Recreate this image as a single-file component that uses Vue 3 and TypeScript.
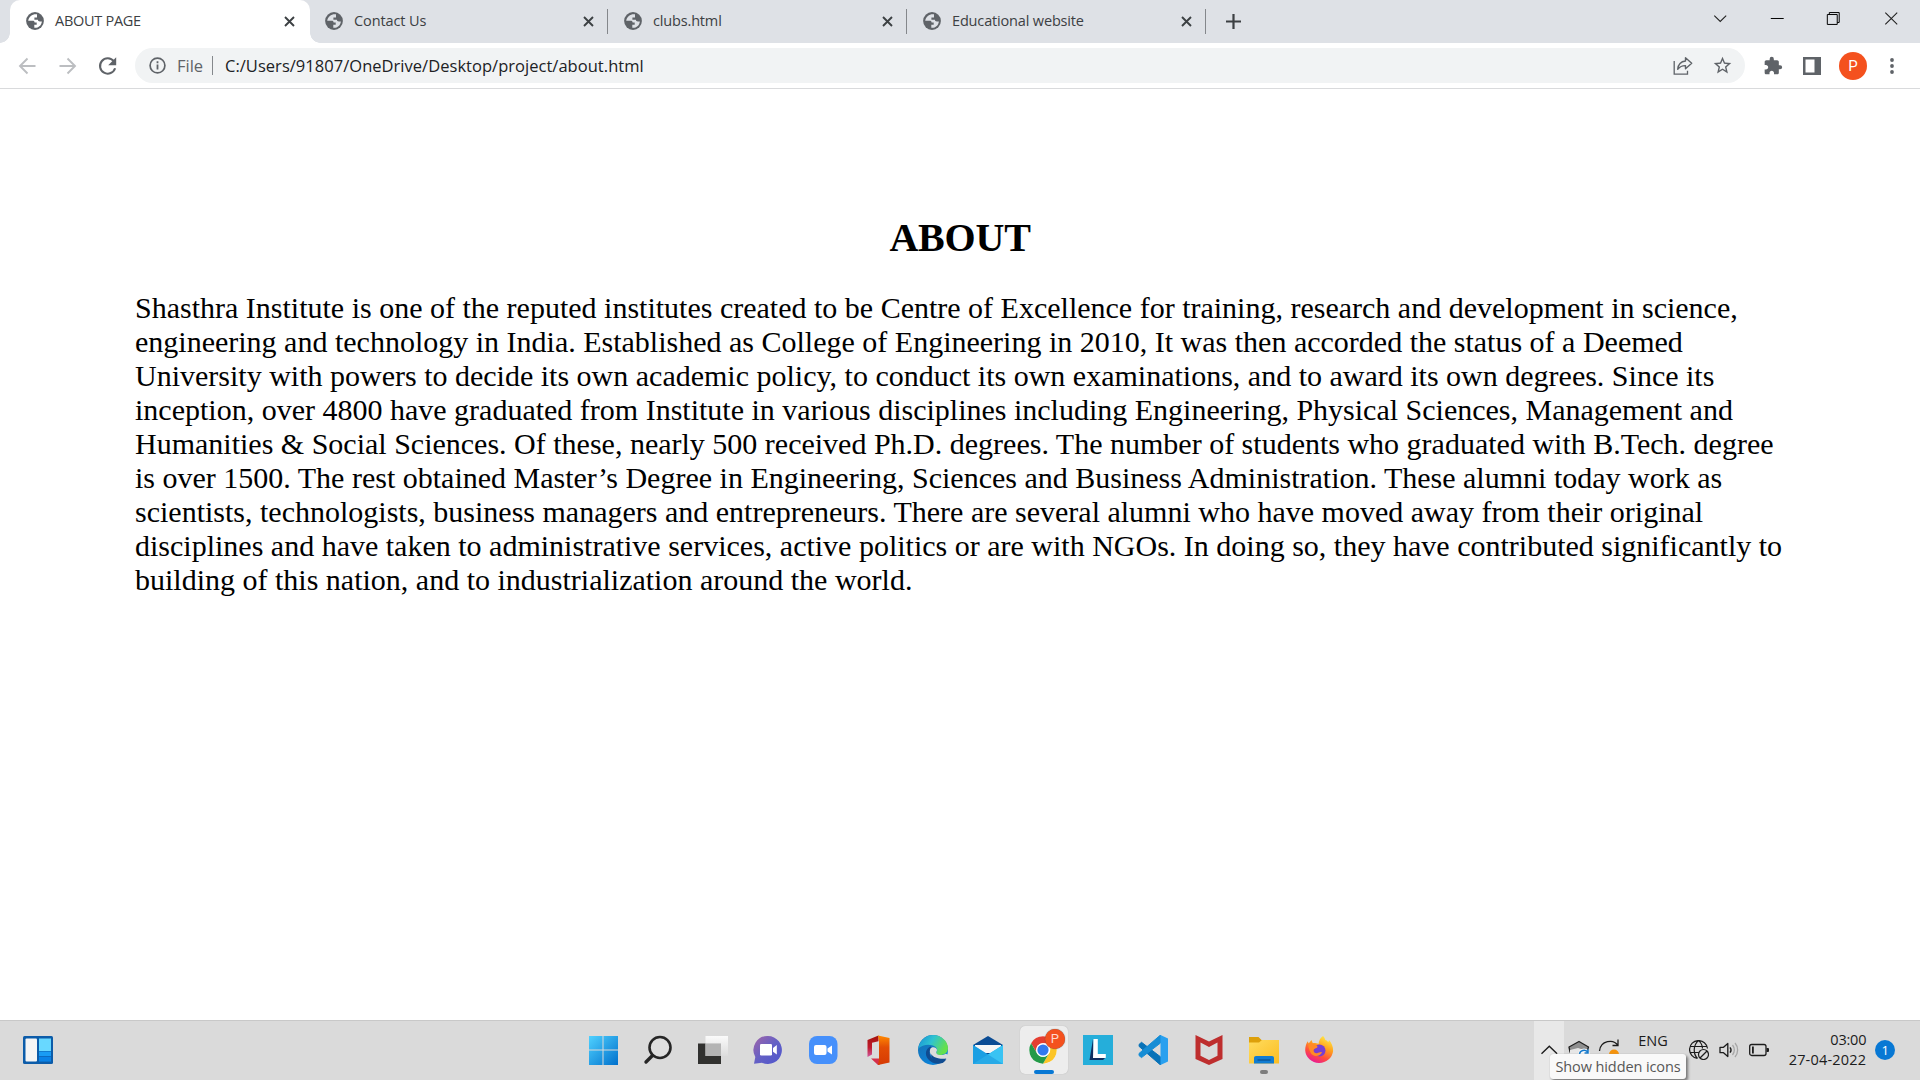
<script setup lang="ts">
interface Tab {
  title: string
  active: boolean
  spacing: string
}

const tabs: Tab[] = [
  { title: 'ABOUT PAGE', active: true, spacing: '-0.28px' },
  { title: 'Contact Us', active: false, spacing: '-0.1px' },
  { title: 'clubs.html', active: false, spacing: '-0.16px' },
  { title: 'Educational website', active: false, spacing: '-0.16px' },
]

const lines: string[] = [
  'Shasthra Institute is one of the reputed institutes created to be Centre of Excellence for training, research and development in science,',
  'engineering and technology in India. Established as College of Engineering in 2010, It was then accorded the status of a Deemed',
  'University with powers to decide its own academic policy, to conduct its own examinations, and to award its own degrees. Since its',
  'inception, over 4800 have graduated from Institute in various disciplines including Engineering, Physical Sciences, Management and',
  'Humanities & Social Sciences. Of these, nearly 500 received Ph.D. degrees. The number of students who graduated with B.Tech. degree',
  'is over 1500. The rest obtained Master’s Degree in Engineering, Sciences and Business Administration. These alumni today work as',
  'scientists, technologists, business managers and entrepreneurs. There are several alumni who have moved away from their original',
  'disciplines and have taken to administrative services, active politics or are with NGOs. In doing so, they have contributed significantly to',
  'building of this nation, and to industrialization around the world.',
]
</script>

<template>
  <div class="screen">
    <header class="tabstrip">
      <div v-for="tab in tabs" :key="tab.title" class="tab" :class="{ active: tab.active }">
        <svg class="globe" viewBox="0 0 18 18">
          <circle cx="9" cy="9" r="8.9" fill="#5f6368" />
          <path d="M11 2.300C6.800 1.600 3 4.400 2.200 8.700h4.600c1.100 0 1.800.7 1.800 1.700h2.100v2.300H8.300v3.100c4 .4 7.200-2.200 7.600-6.300h-2c-1.300 0-2-.7-2-1.700H8.400V5.500H11z" :fill="tab.active ? '#ffffff' : '#dee1e6'" />
        </svg>
        <span class="title" :style="{ letterSpacing: tab.spacing }">{{ tab.title }}</span>
        <svg class="close" viewBox="0 0 11 11"><path d="M1 1l9 9M10 1l-9 9" stroke="#3c4043" stroke-width="1.9" /></svg>
      </div>
      <svg class="plus" viewBox="0 0 15 15"><path d="M7.500 0v15M0 7.500h15" stroke="#3c4043" stroke-width="2.200" /></svg>
      <div class="winbtns">
        <svg viewBox="0 0 58 36"><path d="M23.500 15.500l6 6 6-6" fill="none" stroke="#222" stroke-width="1.100" /></svg>
        <svg viewBox="0 0 58 36"><path d="M22 18.500h13" stroke="#000" /></svg>
        <svg viewBox="0 0 58 36"><path d="M21.500 14.500h10v10h-10zM23.500 14.500v-2h10v10h-2" fill="none" stroke="#000" /></svg>
        <svg viewBox="0 0 58 36"><path d="M21.500 12.500l12 12M33.500 12.500l-12 12" stroke="#222" stroke-width="1.100" /></svg>
      </div>
    </header>

    <div class="toolbar">
      <svg class="nav" viewBox="0 0 40 44"><path d="M35.500 22H20.500M27.500 14.500L20 22l7.500 7.500" fill="none" stroke="#bcbec1" stroke-width="1.900" /></svg>
      <svg class="nav" viewBox="0 0 40 44"><path d="M19.500 22h15M27.500 14.500l7.500 7.500-7.500 7.500" fill="none" stroke="#bcbec1" stroke-width="1.900" /></svg>
      <svg class="nav" viewBox="0 0 40 44"><path d="M33.800 17.200a7.700 7.700 0 1 0 1.300 7" fill="none" stroke="#5f6368" stroke-width="2.100" /><path d="M36.200 13.200v8h-8z" fill="#5f6368" /></svg>
      <div class="omnibox">
        <svg class="info" viewBox="0 0 17 17"><circle cx="8.500" cy="8.500" r="7.400" fill="none" stroke="#5f6368" stroke-width="1.700" /><path d="M8.500 7.500v5M8.500 4.300v1.900" stroke="#5f6368" stroke-width="1.800" /></svg>
        <span class="scheme">File</span>
        <i class="bar"></i>
        <span class="url">C:/Users/91807/OneDrive/Desktop/project/about.html</span>
        <svg class="share" viewBox="0 0 20 20"><path d="M1.200 5v13.200h13.300v-3.500" fill="none" stroke="#5f6368" stroke-width="1.300" /><path d="M12.500 1.800l6.200 5.500-6.200 5.500V9.600C9 9.500 6.500 11 4.700 13.200 5.200 8.500 8 5.500 12.500 5z" fill="none" stroke="#5f6368" stroke-width="1.400" stroke-linejoin="round" /></svg>
        <svg class="star" viewBox="0 0 24 24"><path d="M22 9.240l-7.190-.62L12 2 9.190 8.630 2 9.240l5.460 4.730L5.820 21 12 17.270 18.180 21l-1.630-7.030L22 9.240zM12 15.400l-3.760 2.270 1-4.280-3.320-2.880 4.380-.38L12 6.100l1.710 4.040 4.380.38-3.320 2.880 1 4.280L12 15.400z" fill="#5f6368" /></svg>
      </div>
      <svg class="ext" viewBox="0 0 24 24"><path d="M20.500 11H19V7c0-1.100-.9-2-2-2h-4V3.500a2.500 2.500 0 0 0-5 0V5H4c-1.100 0-2 .9-2 2v3.800h1.500c1.500 0 2.700 1.200 2.700 2.700s-1.200 2.700-2.700 2.700H2V20c0 1.100.9 2 2 2h3.800v-1.500c0-1.500 1.200-2.700 2.700-2.700s2.700 1.200 2.700 2.700V22H17c1.100 0 2-.9 2-2v-4h1.500a2.500 2.500 0 0 0 0-5z" fill="#5f6368" /></svg>
      <svg class="panel" viewBox="0 0 18 18"><path d="M0 0h18v18H0zM2.500 2.500v13h9v-13z" fill="#5f6368" fill-rule="evenodd" /></svg>
      <span class="avatar">P</span>
      <svg class="dots" viewBox="0 0 4 16"><circle cx="2" cy="2" r="1.900" /><circle cx="2" cy="8" r="1.900" /><circle cx="2" cy="14" r="1.900" /></svg>
    </div>

    <main class="page">
      <h1>ABOUT</h1>
      <p><span v-for="line in lines" :key="line" class="line">{{ line }}</span></p>
    </main>

    <footer class="taskbar">
      <svg width="0" height="0" class="defs">
        <defs>
          <linearGradient id="win" x1="0" y1="0" x2="1" y2="1"><stop offset="0" stop-color="#4fd1ff" /><stop offset="1" stop-color="#0070cc" /></linearGradient>
          <linearGradient id="glass" x1="0" y1="0" x2="0" y2="1"><stop offset="0" stop-color="#fff" /><stop offset="1" stop-color="#ddd" /></linearGradient>
          <linearGradient id="chat" x1="0" y1="0" x2="1" y2="1"><stop offset="0" stop-color="#a265a8" /><stop offset=".5" stop-color="#6460c5" /><stop offset="1" stop-color="#4e55cd" /></linearGradient>
          <linearGradient id="officeL" x1="0" y1="0" x2="0" y2="1"><stop offset="0" stop-color="#a3130c" /><stop offset=".55" stop-color="#c11a2d" /><stop offset="1" stop-color="#d0579c" /></linearGradient>
          <linearGradient id="officeR" x1="0" y1="0" x2="0" y2="1"><stop offset="0" stop-color="#ff8a00" /><stop offset=".4" stop-color="#e34d05" /><stop offset="1" stop-color="#d63a04" /></linearGradient>
          <linearGradient id="edgeTop" x1="0" y1="0" x2="1" y2=".4"><stop offset="0" stop-color="#168dd8" /><stop offset=".5" stop-color="#2fc3d0" /><stop offset="1" stop-color="#65e04c" /></linearGradient>
          <linearGradient id="edgeLeft" x1="0" y1="0" x2=".6" y2="1"><stop offset="0" stop-color="#1a6fae" /><stop offset="1" stop-color="#0a84dc" /></linearGradient>
          <linearGradient id="folder" x1="0" y1="0" x2="1" y2="1"><stop offset="0" stop-color="#ffdc5e" /><stop offset="1" stop-color="#fbbd22" /></linearGradient>
          <linearGradient id="fox" x1=".8" y1="0" x2=".3" y2="1"><stop offset="0" stop-color="#fff04a" /><stop offset=".4" stop-color="#ffa01e" /><stop offset=".7" stop-color="#ff4d3c" /><stop offset="1" stop-color="#e8179a" /></linearGradient>
        </defs>
      </svg>

      <svg class="widgets" viewBox="0 0 30 28"><rect width="30" height="28" rx="1.500" fill="#0c5ca9" /><rect x="2.500" y="2.500" width="11.500" height="23" rx="1" fill="#f5f5f5" /><path d="M16 2.500h12v12.500H16z" fill="#68d8ff" /><path d="M16 15.500h12v4.500H16z" fill="#199cf4" /><path d="M16 20.600h12v5H16z" fill="#0a82e6" /></svg>

      <div class="apps">
        <div class="app"><svg viewBox="0 0 30 30"><path d="M1 1h13.500v13.500H1zM15.500 1H30v13.500H15.500zM1 15.500h13.500V30H1zM15.500 15.500H30V30H15.500z" fill="url(#win)" /></svg></div>
        <div class="app"><svg viewBox="0 0 30 30"><circle cx="17" cy="12.500" r="10.500" fill="#e3e3e3" fill-opacity=".6" stroke="#262626" stroke-width="2.600" /><path d="M9.500 20.500L3 27" stroke="#262626" stroke-width="3.400" stroke-linecap="round" /></svg></div>
        <div class="app"><svg viewBox="0 0 30 30"><path d="M0 8.500h23V29H0z" fill="#31312f" /><path d="M7.500 1H30v20H7.500z" fill="url(#glass)" fill-opacity=".88" /><path d="M7.500 8.500H23V21H7.500z" fill="#b4b4b4" /></svg></div>
        <div class="app"><svg viewBox="0 0 30 30"><path d="M15 1a14 14 0 1 1-6 26.700L1 28.800l1.300-6.900A14 14 0 0 1 15 1z" fill="url(#chat)" /><rect x="7" y="9" width="12" height="11.500" rx="1.300" fill="#fff" /><path d="M20 13l3.800-3v9.500L20 16.700z" fill="#fff" /></svg></div>
        <div class="app"><svg viewBox="0 0 30 30"><rect x="1" y="1" width="28.500" height="28" rx="8" fill="#4690fb" /><rect x="6" y="10" width="12.500" height="10" rx="2" fill="#fff" /><path d="M19.500 13.500l4.500-3v9l-4.500-3z" fill="#fff" /></svg></div>
        <div class="app"><svg viewBox="0 0 30 30"><path d="M15.500.5L4.500 5v17l4.500-2.500V7.800l6.500-1.600z" fill="url(#officeL)" /><path d="M8 23.500h8l1 6L15 30z" fill="#d5304b" /><path d="M15 .5L26.500 3v24.500L15 30l1-5.500V6z" fill="url(#officeR)" /></svg></div>
        <div class="app"><svg viewBox="0 0 30 30"><circle cx="15" cy="15" r="15" fill="url(#edgeLeft)" /><path d="M.2 13.500C2 4.500 8.200 0 15 0c8 0 15 6 15 13 0 5-4 7-8 7-3.500 0-4.500-1.500-3.500-3 1.500-2 .5-5-3.500-6.500-5-1.700-11-.5-14.800 3z" fill="url(#edgeTop)" /><path d="M12.500 11.500c-5 2-6 8-2.500 12.500 3.500 4.500 9.500 5.800 15 3.800 1.500-1 2.600-2.200 3.400-3.500-6 2.500-13 1.700-16-3.300-1.500-3-1-6.500 1.500-8.500z" fill="#104c91" /><path d="M12.500 13.500c2-2.500 6.500-1 6.500 1.600 0 1.700-1.500 2-.5 3.400 1.500 2 6.500 2 9.500.3L30 20c-.5 1.500-1 3-1.700 4.100-1.200.2-2.600-.3-4.600-.2-5 .2-9-1.500-10.700-4-1.200-2-1.600-4.500-.5-6.400z" fill="#dcdcdc" /><path d="M13 19c2.500 4 9 5.500 15.300 4.500-1 1.700-2.200 3.300-4.300 4.500-5 .5-10-2-11-9z" fill="#104c91" /></svg></div>
        <div class="app"><svg viewBox="0 0 30 30"><path d="M0 10L15 1l15 9v10H0z" fill="#0a4c94" /><path d="M2 10h26v8H2z" fill="#f6f6f6" /><path d="M0 10l15 9.500L30 10v19H0z" fill="#1ba7e8" /><path d="M0 29l30-19v19z" fill="#39c3f3" /><path d="M0 10l15 9.500L30 29H0z" fill="#1c99e0" fill-opacity=".6" /></svg></div>
        <div class="app chrome">
          <svg viewBox="0 0 30 30"><circle cx="15" cy="15" r="13.700" fill="#fff" /><path d="M3.100 8.200A13.700 13.700 0 0 1 26.900 8.200H15a6.800 6.800 0 0 0-5.900 10.200z" fill="#e43e31" /><path d="M26.900 8.200A13.700 13.700 0 0 1 15 28.700l5.900-10.300A6.800 6.800 0 0 0 18.500 8.200z" fill="#fcc527" /><path d="M15 28.700A13.700 13.700 0 0 1 3.100 8.200l6 10.200a6.800 6.800 0 0 0 11.800 0z" fill="#249a48" /><circle cx="15" cy="15" r="6.800" fill="#fff" /><circle cx="15" cy="15" r="5.600" fill="#3279ee" /></svg>
          <b class="profile">P</b><i class="mark"></i>
        </div>
        <div class="app"><svg viewBox="0 0 30 30"><path d="M0 0h30v30H0z" fill="#25aeda" /><path d="M10 4L6.500 25H20l3-3-12-1z" fill="#102f60" /><path d="M10.500 4h4.300v15h8v4H10z" fill="#fff" /></svg></div>
        <div class="app"><svg viewBox="0 0 30 30"><path d="M1 9.500l2.500-2.200 19 14.500V30L1.200 11.500z" fill="#0872b8" stroke="#0872b8" stroke-linejoin="round" /><path d="M22.500 0v8L3.500 22.600 1 20.500v-2z" fill="#168dd5" stroke="#168dd5" stroke-linejoin="round" /><path d="M22.500 0L30 3.500v23L22.500 30z" fill="#29a0ef" /></svg></div>
        <div class="app"><svg viewBox="0 0 30 30"><path d="M1.500 0L15 6.500 28.500 0v24L15 30 1.500 24zM6.500 7.500v13.300L15 25l8.500-4.200V7.500L15 12z" fill="#be2e2e" fill-rule="evenodd" /></svg></div>
        <div class="app"><svg viewBox="0 0 30 30"><path d="M0 2h9.500l3 3H30v5H0z" fill="#dda00b" /><path d="M0 7.500h10l3-2.500h17v23.500H0z" fill="url(#folder)" /><path d="M5 28.500V23c0-1.300.8-2 2-2h16c1.200 0 2 .7 2 2v5.500z" fill="#117cd2" /><path d="M8.500 25h13" stroke="#0a4a86" stroke-width="1.100" /></svg><i class="mark idle"></i></div>
        <div class="app"><svg viewBox="0 0 30 30"><path d="M19 1c1 1 2 2.600 2.300 4 1.200.3 2.300 1.200 3 2.200L25 5c2.500 3 4.300 6.600 4.100 11A14 13.300 0 0 1 1.200 15.500c0-4 1-7 2.600-9.300l.8 2.300L7.500 5l1.300 3.200C11 7.800 13 8.500 14.500 9c.3-3.500 2-6.500 4.500-8z" fill="url(#fox)" /><circle cx="15.500" cy="15.500" r="6" fill="#773fd2" /><path d="M4.500 8.500c3.500-.5 7 .3 9 3 0 2-3.500 1.800-4 3.500-.3 2 1.500 3.500 3.500 3.200 2-.3 3-1.500 5-1-1.500 4.500-9.500 5.200-11.500.3C5 14.500 4 11.500 4.500 8.500z" fill="#ff8a26" /></svg></div>
      </div>

      <div class="hidden-btn">
        <svg viewBox="0 0 30 60"><path d="M7.500 32.800l7.800-7.500 7.800 7.500" fill="none" stroke="#1c1c1c" stroke-width="1.400" /></svg>
      </div>
      <svg class="tray meet" viewBox="0 0 24 24"><path d="M2 9L12 3.500l9.500 5.500L20 14H3z" fill="#8f8f8f" stroke="#202020" stroke-width="1.300" stroke-linejoin="round" /><path d="M3 12l8-2 9 3v8H3z" fill="#e6e6e6" /><circle cx="17" cy="16.500" r="6" fill="#f8f8f8" /><path d="M12.500 17a4.600 4.600 0 0 1 8.500-2.500m0-3v3.500h-3.500" fill="none" stroke="#1479cc" stroke-width="1.500" /></svg>
      <svg class="tray sync" viewBox="0 0 24 24"><path d="M2.500 13C3.500 2.500 16.500.5 21 7.500M21 1.500v6h-5.500" fill="none" stroke="#1c1c1c" stroke-width="1.300" /><circle cx="17" cy="16.500" r="5" fill="#f5930b" /></svg>
      <span class="lang">ENG</span>
      <svg class="tray net" viewBox="0 0 20 20"><g fill="none" stroke="#1c1c1c" stroke-width="1.200"><path d="M18.500 8.500A9 9 0 1 0 8.500 18.500M.8 6.500h17M.8 12.500h9M9.500.6C4 5 4 14 8.500 18.500M9.500.6c2.500 2 3.900 5 4 8" /><circle cx="14.500" cy="14.500" r="5" /><path d="M11 18l7-7" /></g></svg>
      <svg class="tray snd" viewBox="0 0 20 20"><g fill="none" stroke-width="1.300"><path d="M1 7.300h3.500L8.800 3.500v13L4.500 12.700H1z" stroke="#1c1c1c" stroke-linejoin="round" /><path d="M11 7.300c1.200 1.500 1.200 3.900 0 5.400" stroke="#1c1c1c" /><path d="M13.500 5c2.400 2.800 2.400 7.200 0 10M16 3c3.500 4 3.500 10 0 14" stroke="#a6a6a6" /></g></svg>
      <svg class="tray bat" viewBox="0 0 20 20"><rect x=".7" y="4.500" width="16.300" height="11" rx="2" fill="none" stroke="#1c1c1c" stroke-width="1.300" /><path d="M3 6.500h1.800v7H3zM17.500 8H19q1 0 1 1v2q0 1-1 1h-1.500z" fill="#1c1c1c" /></svg>
      <div class="clock"><span>03:00</span><span class="date">27-04-2022</span></div>
      <span class="badge">1</span>
      <div class="tooltip">Show hidden icons</div>
    </footer>
  </div>
</template>

<style>
body { background: #fff; overflow: hidden; }
</style>

<style scoped>
.screen { width: 1920px; height: 1080px; display: flex; flex-direction: column; background: #fff; font-family: "Open Sans", "Noto Sans", sans-serif; overflow: hidden; }
svg { display: block; flex: none; }
.tabstrip { height: 43px; flex: none; display: flex; align-items: flex-start; background: #dee1e6; padding-left: 10px; }
.tab { position: relative; width: 299px; height: 43px; flex: none; display: flex; align-items: center; box-sizing: border-box; padding: 0 14px 1px 16px; color: #3c4043; }
.tab:not(.active)::after { content: ""; position: absolute; right: 0; top: 9px; width: 1px; height: 25px; background: #84878b; }
.tab.active { background: #fff; border-radius: 10px 10px 0 0; width: 300px; padding-right: 15px; margin-right: -1px; }
.tab.active::before, .tab.active::after { content: ""; position: absolute; bottom: 0; width: 10px; height: 10px; }
.tab.active::before { left: -10px; background: radial-gradient(circle at 0 0, #dee1e6 9.500px, #fff 10px); }
.tab.active::after { right: -10px; background: radial-gradient(circle at 100% 0, #dee1e6 9.500px, #fff 10px); z-index: 1; }
.globe { width: 18px; height: 18px; }
.title { font-size: 14.500px; line-height: 20px; margin-left: 11px; flex: 1; white-space: nowrap; }
.close { width: 11px; height: 11px; margin-top: 1px; }
.plus { width: 15px; height: 15px; margin: 14px 0 0 20px; }
.winbtns { display: flex; margin-left: auto; margin-right: -1px; }
.winbtns svg { width: 57.500px; height: 36px; }
.toolbar { height: 45px; flex: none; display: flex; align-items: center; background: #fff; border-bottom: 1px solid #d9dadc; }
.nav { width: 40px; height: 44px; }
.omnibox { height: 35px; width: 1610px; margin-left: 15px; border-radius: 18px; background: #f1f3f4; display: flex; align-items: center; box-sizing: border-box; padding: 0 12px 0 14px; font-size: 16.500px; color: #202124; }
.info { width: 17px; height: 17px; }
.scheme { color: #5f6368; margin-left: 11px; width: 35px; }
.bar { width: 1px; height: 19px; background: #85888c; }
.url { margin-left: 12px; flex: 1; letter-spacing: .03px; white-space: nowrap; }
.share { width: 20px; height: 20px; }
.star { width: 21px; height: 21px; margin-left: 19px; }
.ext { width: 20px; height: 20px; margin-left: 18px; }
.panel { width: 18px; height: 18px; margin-left: 20px; }
.avatar { width: 28px; height: 28px; border-radius: 50%; background: #f4511e; color: #fff; font: 15px/28px Roboto, sans-serif; text-align: center; margin-left: 18px; }
.dots { width: 4px; height: 16px; margin-left: 23px; fill: #5f6368; }
.page { flex: 1; padding: 126px 135px 0; font-family: "Liberation Serif", serif; color: #000; }
h1 { margin: 0; font-size: 40px; line-height: 46px; text-align: center; letter-spacing: -.2px; }
p { margin: 30px 0 0; font-size: 30px; line-height: 34px; }
.line { display: block; white-space: nowrap; }
.taskbar { position: relative; height: 60px; flex: none; box-sizing: border-box; border-top: 1px solid #c8c8c8; background: #dadada; display: flex; align-items: center; color: #1c1c1c; }
.defs { position: absolute; }
.widgets { width: 30px; height: 28px; margin: 0 0 1px 23px; }
.apps { display: flex; margin: 0 0 1px 522px; }
.app { position: relative; width: 55.100px; height: 58px; display: flex; align-items: center; justify-content: center; }
.app svg { width: 30px; height: 30px; }
.chrome::before { content: ""; position: absolute; left: 4px; top: 5px; width: 48px; height: 48px; border-radius: 5px; background: #ededed; box-shadow: 0 0 1px #aaa; }
.chrome svg { position: relative; }
.profile { position: absolute; left: 29px; top: 8px; width: 20px; height: 20px; border-radius: 50%; background: #f4511e; color: #ffd8cb; font: 13px/20px Roboto, sans-serif; text-align: center; box-shadow: 0 0 1px #444; }
.mark { position: absolute; left: 18px; top: 49px; width: 20px; height: 4px; border-radius: 2px; background: #0878d4; }
.mark.idle { left: 23.500px; width: 8px; background: #7d7d7d; }
.hidden-btn { width: 30px; height: 60px; margin-left: 188px; background: #e8e8e8; }
.hidden-btn svg { width: 30px; height: 60px; }
.meet { width: 24px; height: 24px; margin-left: 3px; }
.sync { width: 24px; height: 24px; margin-left: 6px; }
.lang { font-size: 14.500px; line-height: 20px; margin: -20px 0 0 17px; width: 51px; }
.tray { margin-bottom: 2px; }
.net { width: 20px; height: 20px; }
.snd { width: 20px; height: 20px; margin-left: 10px; }
.bat { width: 20px; height: 20px; margin-left: 10px; }
.clock { width: 97px; display: flex; flex-direction: column; text-align: right; font-size: 14.500px; line-height: 20px; letter-spacing: -.2px; white-space: nowrap; margin-bottom: 2px; }
.date { letter-spacing: .2px; }
.badge { width: 20px; height: 20px; margin: 0 0 2px 9px; border-radius: 50%; background: #0878d4; color: #fff; font-size: 13px; line-height: 20px; text-align: center; }
.tooltip { position: absolute; left: 1550px; top: 33px; width: 136px; height: 25px; box-sizing: border-box; border-radius: 3px; background: #f9f9f9; color: #575757; font-size: 14.500px; line-height: 25px; text-align: center; letter-spacing: -.1px; box-shadow: 2px 2px 3px #777, 0 0 1px #aaa; white-space: nowrap; }
</style>
